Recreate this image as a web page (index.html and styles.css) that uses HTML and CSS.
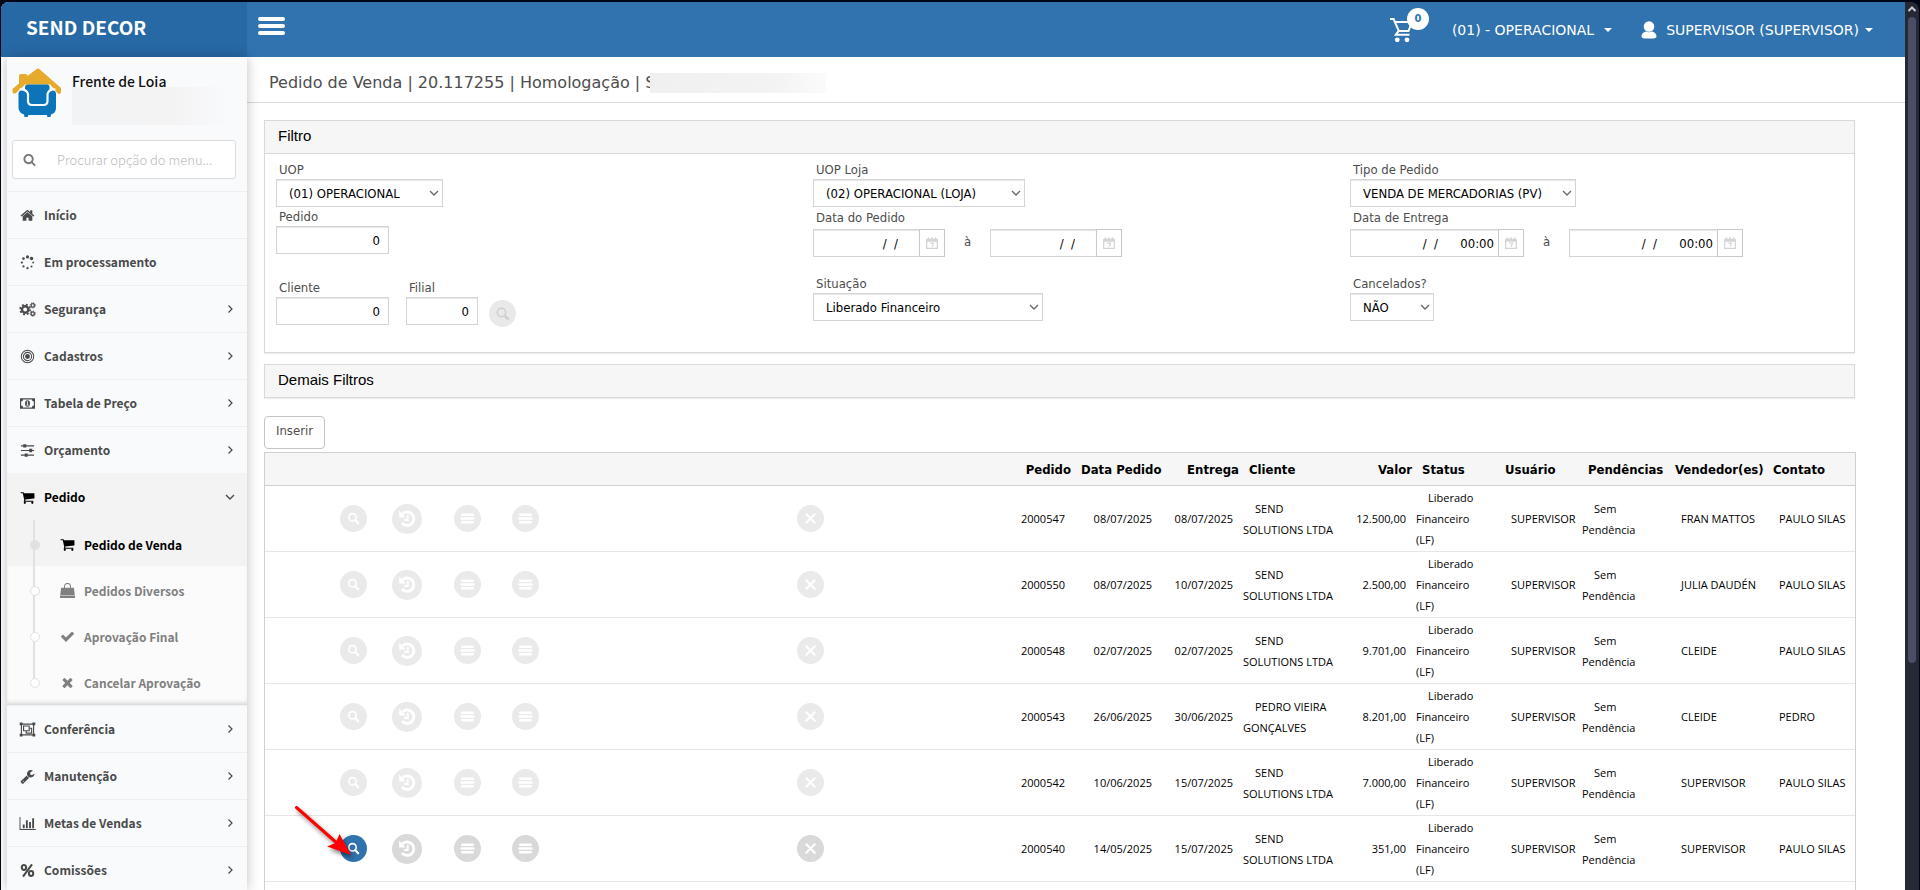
FILE: index.html
```html
<!DOCTYPE html>
<html lang="pt-BR">
<head>
<meta charset="utf-8">
<title>Pedido de Venda</title>
<link rel="stylesheet" href="styles.css">
</head>
<body>
<svg class="sprite" aria-hidden="true">
  <symbol id="i-home" viewBox="0 0 1792 1792"><path d="M1472 992v480q0 26-19 45t-45 19h-384v-384h-256v384h-384q-26 0-45-19t-19-45v-480q0-1 .5-3t.5-3l575-474 575 474q1 2 1 6zm223-69l-62 74q-8 9-21 11h-3q-13 0-21-7l-692-577-692 577q-12 8-24 7-13-2-21-11l-62-74q-8-10-7-23.5t11-21.5l719-599q32-26 76-26t76 26l244 204v-195q0-14 9-23t23-9h192q14 0 23 9t9 23v408l219 182q10 8 11 21.5t-7 23.5z"/></symbol>
  <symbol id="i-cart" viewBox="0 0 1792 1792"><path d="M704 1536q0 52-38 90t-90 38-90-38-38-90 38-90 90-38 90 38 38 90zm896 0q0 52-38 90t-90 38-90-38-38-90 38-90 90-38 90 38 38 90zm128-1088v512q0 24-16.5 42.5t-40.5 21.5l-1044 122q13 60 13 70 0 16-24 64h920q26 0 45 19t19 45-19 45-45 19h-1024q-26 0-45-19t-19-45q0-11 8-31.5t16-36 21.5-40 15.5-29.5l-177-823h-204q-26 0-45-19t-19-45 19-45 45-19h256q16 0 28.5 6.5t19.5 15.5 13 24.5 8 26 5.5 29.5 4.5 26h1201q26 0 45 19t19 45z"/></symbol>
  <symbol id="i-check" viewBox="0 0 1792 1792"><path d="M1671 566q0 40-28 68l-724 724-136 136q-28 28-68 28t-68-28l-136-136-362-362q-28-28-28-68t28-68l136-136q28-28 68-28t68 28l294 295 656-657q28-28 68-28t68 28l136 136q28 28 28 68z"/></symbol>
  <symbol id="i-times" viewBox="0 0 1792 1792"><path d="M1490 1322q0 40-28 68l-136 136q-28 28-68 28t-68-28l-294-294-294 294q-28 28-68 28t-68-28l-136-136q-28-28-28-68t28-68l294-294-294-294q-28-28-28-68t28-68l136-136q28-28 68-28t68 28l294 294 294-294q28-28 68-28t68 28l136 136q28 28 28 68t-28 68l-294 294 294 294q28 28 28 68z"/></symbol>
  <symbol id="i-search" viewBox="0 0 1792 1792"><path d="M1216 832q0-185-131.5-316.5t-316.5-131.5-316.5 131.5-131.5 316.5 131.5 316.5 316.5 131.5 316.5-131.5 131.5-316.5zm512 832q0 52-38 90t-90 38q-54 0-90-38l-343-342q-179 124-399 124-143 0-273.5-55.5t-225-150-150-225-55.5-273.5 55.5-273.5 150-225 225-150 273.5-55.5 273.5 55.5 225 150 150 225 55.5 273.5q0 220-124 399l343 343q37 37 37 90z"/></symbol>
  <symbol id="i-wrench" viewBox="0 0 1792 1792"><path d="M448 1472q0-26-19-45t-45-19-45 19-19 45 19 45 45 19 45-19 19-45zm644-420l-682 682q-37 37-90 37-52 0-91-37l-106-108q-38-36-38-90 0-53 38-91l681-681q39 98 114.5 173.5t173.5 114.5zm634-435q0 39-23 106-47 134-164.5 217.5t-258.5 83.5q-185 0-316.5-131.5t-131.5-316.5 131.5-316.5 316.5-131.5q58 0 121.5 16.5t107.5 46.5q16 11 16 28t-16 28l-293 169v224l193 107q5-3 79-48.5t135.5-81 70.5-35.5q15 0 23.5 10t8.5 25z"/></symbol>
  <symbol id="i-spinner" viewBox="0 0 16 16"><circle cx="8" cy="2" r="1.7"/><circle cx="12.3" cy="3.8" r="1.9"/><circle cx="14" cy="8" r="1"/><circle cx="12.3" cy="12.2" r="1.1"/><circle cx="8" cy="14" r="1.2"/><circle cx="3.7" cy="12.2" r="1.2"/><circle cx="2" cy="8" r="1.2"/><circle cx="3.7" cy="3.8" r="1.4"/></symbol>
  <symbol id="i-gears" viewBox="0 0 18 16"><g fill="none" stroke="currentColor"><circle cx="6.5" cy="8" r="3.4" stroke-width="2.6"/><circle cx="6.5" cy="8" r="5.3" stroke-width="1.8" stroke-dasharray="2.1 2.06"/><circle cx="14.6" cy="3.6" r="1.8" stroke-width="1.4"/><circle cx="14.6" cy="3.6" r="2.8" stroke-width="1" stroke-dasharray="1.1 1.1"/><circle cx="14.6" cy="12.4" r="1.8" stroke-width="1.4"/><circle cx="14.6" cy="12.4" r="2.8" stroke-width="1" stroke-dasharray="1.1 1.1"/></g></symbol>
  <symbol id="i-target" viewBox="0 0 16 16"><g fill="none" stroke="currentColor" stroke-width="1.1"><circle cx="8" cy="8" r="6.6"/><circle cx="8" cy="8" r="4.4"/></g><circle cx="8" cy="8" r="2.6"/></symbol>
  <symbol id="i-money" viewBox="0 0 18 16"><path fill-rule="evenodd" d="M1 2.5h16v11H1zM4.300 3.700A2.200 2.200 0 0 1 2.200 5.800v4.400a2.200 2.200 0 0 1 2.100 2.100h9.400a2.200 2.200 0 0 1 2.100-2.100V5.800a2.200 2.200 0 0 1-2.100-2.100z"/><ellipse cx="9" cy="8" rx="2.600" ry="3.400"/><path d="M8 6.500l1-.8h.5v3.700h.8v.8H7.800v-.8h.8V6.800z" fill="#f9fafc"/></symbol>
  <symbol id="i-sliders" viewBox="0 0 16 16"><path d="M1 2.500h14v1.200H1zM1 7.400h14v1.200H1zM1 12.300h14v1.200H1zM3.500 1.300h3.200v3.500H3.500zM9.800 6.200H13v3.600H9.800zM5 11.100h3.200v3.600H5z"/></symbol>
  <symbol id="i-bag" viewBox="0 0 18 16"><path d="M2.200 5h13.600l1 8H1.200zM1 13.600h16V16H1z"/><path d="M5.800 6.500V3.600a3.200 3.200 0 0 1 6.400 0v2.900" fill="none" stroke="currentColor" stroke-width="1.100"/></symbol>
  <symbol id="i-group" viewBox="0 0 18 16"><g fill="none" stroke="currentColor" stroke-width="1.200"><path d="M2.500 2.300h13v11.400h-13zM4.800 4.300h6v5h-6zM11 6.600h2.400v5.200H7.600V9.500"/></g><path d="M.7.500h3v3h-3zM14.300.500h3v3h-3zM.7 12.500h3v3h-3zM14.300 12.500h3v3h-3z"/></symbol>
  <symbol id="i-chart" viewBox="0 0 18 16"><path d="M.5 1h1v12.800H18V15H.5zM4 9h2v4H4zM7.300 4.500h2V13h-2zM10.700 6.500h2V13h-2zM14 2.500h2V13h-2z"/></symbol>
  <symbol id="i-percent" viewBox="0 0 16 16"><g fill="none" stroke="currentColor" stroke-width="2.200"><ellipse cx="4.200" cy="4.800" rx="2.300" ry="2.600"/><ellipse cx="11.800" cy="11.200" rx="2.300" ry="2.600"/><path d="M12.800 1.500L3.200 14.500"/></g></symbol>
  <symbol id="i-right" viewBox="0 0 10 10"><path d="M3.500 1.500L7 5 3.500 8.500" fill="none" stroke="currentColor" stroke-width="1.200"/></symbol>
  <symbol id="i-down" viewBox="0 0 10 10"><path d="M1 3l4 4 4-4" fill="none" stroke="currentColor" stroke-width="1.400"/></symbol>
  <symbol id="i-calendar" viewBox="0 0 12 12"><path fill-rule="evenodd" d="M0 2h12v10H0zM1.300 4.700v6h9.400v-6z"/><path d="M1.500.5h2v2h-2zM5 .5h2v2H5zM8.500.5h2v2h-2z"/><path d="M4.200 6.200h3.400L6 9.800" fill="none" stroke="currentColor" stroke-width="1.200"/></symbol>
  <symbol id="a-search" viewBox="0 0 27 27"><circle cx="13.500" cy="13.500" r="13.500"/><g fill="none" stroke="#fff"><circle cx="12.500" cy="12.300" r="3.700" stroke-width="1.600"/><path d="M15.200 15l3 3.300" stroke-width="2.200" stroke-linecap="round"/></g></symbol>
  <symbol id="a-history" viewBox="0 0 30 30"><circle cx="15" cy="15" r="15"/><path d="M10.600 9.800a6.700 6.700 0 1 1-.6 9.200" fill="none" stroke="#fff" stroke-width="2.900"/><path d="M7.200 6.500v7h6.700z" fill="#fff"/><path d="M15.800 11v5h-3.600" fill="none" stroke="#fff" stroke-width="1.800"/></symbol>
  <symbol id="a-list" viewBox="0 0 27 27"><circle cx="13.500" cy="13.500" r="13.500"/><path d="M8.300 9.800h10.400M7.600 13.500h11.800M8.300 17.200h10.400" stroke="#fff" stroke-width="2.600" stroke-linecap="round"/></symbol>
  <symbol id="a-close" viewBox="0 0 27 27"><circle cx="13.500" cy="13.500" r="13.500"/><path d="M9.300 9.300l8.400 8.400M17.700 9.300l-8.400 8.400" stroke="#fff" stroke-width="2.100" stroke-linecap="round"/></symbol>
</svg>

<div class="window">
  <div class="app">
    <header class="topbar">
      <a class="brand" href="#">SEND DECOR</a>
      <button class="burger" type="button" aria-label="Menu"><span></span><span></span><span></span></button>
      <nav class="account">
        <a class="basket" href="#" aria-label="Carrinho">
          <svg width="24" height="26" viewBox="0 0 24 26"><g fill="none" stroke="#fff" stroke-width="2"><path d="M1 2h3.600l5.200 12h9.700L23 5H6.500"/><path d="M9.500 14l-2.700 3.800h13.700"/></g><circle cx="8.300" cy="22.800" r="2.400" fill="#fff"/><circle cx="18" cy="22.800" r="2.400" fill="#fff"/></svg>
          <span class="badge">0</span>
        </a>
        <button class="drop unit" type="button">(01) - OPERACIONAL <i class="caret"></i></button>
        <button class="drop user" type="button"><svg width="16" height="18" viewBox="0 0 16 18" fill="#fff"><circle cx="8" cy="5.500" r="5.300"/><path d="M.5 15.500C.5 12.500 3 11 5 10.500c2 1 4 1 6 0 2 .5 4.500 2 4.500 5 0 1.500-2 2-4 2h-7c-2 0-4-.5-4-2z"/></svg>SUPERVISOR (SUPERVISOR) <i class="caret"></i></button>
      </nav>
    </header>

    <div class="columns">
      <aside class="sidebar">
        <div class="profile">
          <svg width="50" height="50" viewBox="0 0 50 50"><path d="M.5 21L7 15.500V8q0-2 2-2h4.500q2 0 2 2L25 .8q1-.8 2 0L49 20v4.500q-1 2.500-3.500.5L38 16.500H13L4 25q-3 1.500-3.500-1z" fill="#e6ab2b"/><path d="M16 16.500h19q2.500 0 2.500 2.500v3q5-1.500 6.500 3v15q0 5-5 6.500l-.5 2.500h-3l-.8-2H16.500l-1 2h-3l-.5-2.500q-5-1.500-5.500-6.500V25q1.500-4.500 6.500-3V19q0-2.500 3-2.500z" fill="#0c74b8"/><path d="M7.500 21.500q7-.5 8.500 4.500v7q0 4 4 4h11.500q4 0 4-4v-7q1.500-5 8-4.500" fill="none" stroke="#f9fafc" stroke-width="2.200"/></svg>
          <div class="who"><strong>Frente de Loja</strong><span class="veil"></span></div>
        </div>
        <label class="find"><svg class="ico"><use href="#i-search"/></svg><input type="search" placeholder="Procurar opção do menu..." aria-label="Procurar opção do menu"></label>
        <nav class="menu">
          <a href="#"><svg class="ico"><use href="#i-home"/></svg><span>Início</span></a>
          <a href="#"><svg class="ico"><use href="#i-spinner"/></svg><span>Em processamento</span></a>
          <a href="#"><svg class="ico"><use href="#i-gears"/></svg><span>Segurança</span><svg class="arrow"><use href="#i-right"/></svg></a>
          <a href="#"><svg class="ico"><use href="#i-target"/></svg><span>Cadastros</span><svg class="arrow"><use href="#i-right"/></svg></a>
          <a href="#"><svg class="ico"><use href="#i-money"/></svg><span>Tabela de Preço</span><svg class="arrow"><use href="#i-right"/></svg></a>
          <a href="#"><svg class="ico"><use href="#i-sliders"/></svg><span>Orçamento</span><svg class="arrow"><use href="#i-right"/></svg></a>
          <a href="#" class="open"><svg class="ico"><use href="#i-cart"/></svg><span>Pedido</span><svg class="arrow"><use href="#i-down"/></svg></a>
          <div class="submenu">
            <a href="#" class="current"><svg class="ico"><use href="#i-cart"/></svg><span>Pedido de Venda</span></a>
            <a href="#"><svg class="ico"><use href="#i-bag"/></svg><span>Pedidos Diversos</span></a>
            <a href="#"><svg class="ico"><use href="#i-check"/></svg><span>Aprovação Final</span></a>
            <a href="#"><svg class="ico"><use href="#i-times"/></svg><span>Cancelar Aprovação</span></a>
          </div>
          <a href="#"><svg class="ico"><use href="#i-group"/></svg><span>Conferência</span><svg class="arrow"><use href="#i-right"/></svg></a>
          <a href="#"><svg class="ico"><use href="#i-wrench"/></svg><span>Manutenção</span><svg class="arrow"><use href="#i-right"/></svg></a>
          <a href="#"><svg class="ico"><use href="#i-chart"/></svg><span>Metas de Vendas</span><svg class="arrow"><use href="#i-right"/></svg></a>
          <a href="#"><svg class="ico"><use href="#i-percent"/></svg><span>Comissões</span><svg class="arrow"><use href="#i-right"/></svg></a>
        </nav>
      </aside>

      <main class="main">
        <h1 class="title">Pedido de Venda | 20.117255 | Homologação | S<span class="veil"></span></h1>
        <div class="content">
          <section class="panel">
            <h2>Filtro</h2>
            <div class="filters">
              <div class="col">
                <div class="field"><label for="uop">UOP</label><span class="select w-uop"><select id="uop"><option>(01) OPERACIONAL</option></select><svg><use href="#i-down"/></svg></span></div>
                <div class="field"><label for="pedido">Pedido</label><input id="pedido" class="box num w-code" value="0"></div>
                <div class="line client">
                  <div class="field"><label for="cliente">Cliente</label><input id="cliente" class="box num w-code" value="0"></div>
                  <div class="field"><label for="filial">Filial</label><input id="filial" class="box num w-branch" value="0"></div>
                  <button class="lookup" type="button" aria-label="Pesquisar cliente"><svg width="14" height="14" viewBox="0 0 14 14"><g fill="none" stroke="#cfcfcf"><circle cx="5.500" cy="5.500" r="4.200" stroke-width="1.600"/><path d="M8.800 8.800l3.800 3.800" stroke-width="2.600"/></g></svg></button>
                </div>
              </div>
              <div class="col">
                <div class="field"><label for="uoploja">UOP Loja</label><span class="select w-loja"><select id="uoploja"><option>(02) OPERACIONAL (LOJA)</option></select><svg><use href="#i-down"/></svg></span></div>
                <div class="field dates"><label for="dp1">Data do Pedido</label>
                  <div class="line">
                    <span class="date"><input id="dp1" class="box w-date" value="/  /"><button type="button" aria-label="Calendário"><svg><use href="#i-calendar"/></svg></button></span>
                    <span class="to">à</span>
                    <span class="date"><input class="box w-date" value="/  /" aria-label="Data do Pedido final"><button type="button" aria-label="Calendário"><svg><use href="#i-calendar"/></svg></button></span>
                  </div>
                </div>
                <div class="field last"><label for="situacao">Situação</label><span class="select w-sit"><select id="situacao"><option>Liberado Financeiro</option></select><svg><use href="#i-down"/></svg></span></div>
              </div>
              <div class="col">
                <div class="field"><label for="tipo">Tipo de Pedido</label><span class="select w-tipo"><select id="tipo"><option>VENDA DE MERCADORIAS (PV)</option></select><svg><use href="#i-down"/></svg></span></div>
                <div class="field dates"><label for="de1">Data de Entrega</label>
                  <div class="line">
                    <span class="date"><input id="de1" class="box w-time" value="/  /      00:00"><button type="button" aria-label="Calendário"><svg><use href="#i-calendar"/></svg></button></span>
                    <span class="to">à</span>
                    <span class="date"><input class="box w-time" value="/  /      00:00" aria-label="Data de Entrega final"><button type="button" aria-label="Calendário"><svg><use href="#i-calendar"/></svg></button></span>
                  </div>
                </div>
                <div class="field last"><label for="cancelados">Cancelados?</label><span class="select w-canc"><select id="cancelados"><option>NÃO</option></select><svg><use href="#i-down"/></svg></span></div>
              </div>
            </div>
          </section>

          <section class="panel closed"><h2>Demais Filtros</h2></section>

          <button class="insert" type="button">Inserir</button>

          <table class="orders">
            <colgroup><col class="c-gap"><col class="c-a"><col class="c-a"><col class="c-c"><col class="c-d"><col><col class="c-ped"><col class="c-data"><col class="c-ent"><col class="c-cli"><col class="c-val"><col class="c-sta"><col class="c-usu"><col class="c-pen"><col class="c-ven"><col class="c-con"></colgroup>
            <thead><tr><th colspan="6"></th><th class="r">Pedido</th><th class="r">Data Pedido</th><th class="r">Entrega</th><th>Cliente</th><th class="r">Valor</th><th>Status</th><th>Usuário</th><th>Pendências</th><th>Vendedor(es)</th><th>Contato</th></tr></thead>
            <tbody>
              <tr><td></td><td class="act"><button type="button" aria-label="Ver"><svg><use href="#a-search"/></svg></button></td><td class="act"><button class="big" type="button" aria-label="Histórico"><svg><use href="#a-history"/></svg></button></td><td class="act"><button type="button" aria-label="Lista"><svg><use href="#a-list"/></svg></button></td><td class="act"><button type="button" aria-label="Detalhes"><svg><use href="#a-list"/></svg></button></td><td class="act far"><button type="button" aria-label="Cancelar"><svg><use href="#a-close"/></svg></button></td><td class="r">2000547</td><td class="r">08/07/2025</td><td class="r">08/07/2025</td><td class="t">SEND SOLUTIONS LTDA</td><td class="r">12.500,00</td><td class="t status">Liberado Financeiro (LF)</td><td class="t">SUPERVISOR</td><td class="t">Sem Pendência</td><td class="t">FRAN MATTOS</td><td class="t">PAULO SILAS</td></tr>
              <tr><td></td><td class="act"><button type="button" aria-label="Ver"><svg><use href="#a-search"/></svg></button></td><td class="act"><button class="big" type="button" aria-label="Histórico"><svg><use href="#a-history"/></svg></button></td><td class="act"><button type="button" aria-label="Lista"><svg><use href="#a-list"/></svg></button></td><td class="act"><button type="button" aria-label="Detalhes"><svg><use href="#a-list"/></svg></button></td><td class="act far"><button type="button" aria-label="Cancelar"><svg><use href="#a-close"/></svg></button></td><td class="r">2000550</td><td class="r">08/07/2025</td><td class="r">10/07/2025</td><td class="t">SEND SOLUTIONS LTDA</td><td class="r">2.500,00</td><td class="t status">Liberado Financeiro (LF)</td><td class="t">SUPERVISOR</td><td class="t">Sem Pendência</td><td class="t">JULIA DAUDÉN</td><td class="t">PAULO SILAS</td></tr>
              <tr><td></td><td class="act"><button type="button" aria-label="Ver"><svg><use href="#a-search"/></svg></button></td><td class="act"><button class="big" type="button" aria-label="Histórico"><svg><use href="#a-history"/></svg></button></td><td class="act"><button type="button" aria-label="Lista"><svg><use href="#a-list"/></svg></button></td><td class="act"><button type="button" aria-label="Detalhes"><svg><use href="#a-list"/></svg></button></td><td class="act far"><button type="button" aria-label="Cancelar"><svg><use href="#a-close"/></svg></button></td><td class="r">2000548</td><td class="r">02/07/2025</td><td class="r">02/07/2025</td><td class="t">SEND SOLUTIONS LTDA</td><td class="r">9.701,00</td><td class="t status">Liberado Financeiro (LF)</td><td class="t">SUPERVISOR</td><td class="t">Sem Pendência</td><td class="t">CLEIDE</td><td class="t">PAULO SILAS</td></tr>
              <tr><td></td><td class="act"><button type="button" aria-label="Ver"><svg><use href="#a-search"/></svg></button></td><td class="act"><button class="big" type="button" aria-label="Histórico"><svg><use href="#a-history"/></svg></button></td><td class="act"><button type="button" aria-label="Lista"><svg><use href="#a-list"/></svg></button></td><td class="act"><button type="button" aria-label="Detalhes"><svg><use href="#a-list"/></svg></button></td><td class="act far"><button type="button" aria-label="Cancelar"><svg><use href="#a-close"/></svg></button></td><td class="r">2000543</td><td class="r">26/06/2025</td><td class="r">30/06/2025</td><td class="t">PEDRO VIEIRA GONÇALVES</td><td class="r">8.201,00</td><td class="t status">Liberado Financeiro (LF)</td><td class="t">SUPERVISOR</td><td class="t">Sem Pendência</td><td class="t">CLEIDE</td><td class="t">PEDRO</td></tr>
              <tr><td></td><td class="act"><button type="button" aria-label="Ver"><svg><use href="#a-search"/></svg></button></td><td class="act"><button class="big" type="button" aria-label="Histórico"><svg><use href="#a-history"/></svg></button></td><td class="act"><button type="button" aria-label="Lista"><svg><use href="#a-list"/></svg></button></td><td class="act"><button type="button" aria-label="Detalhes"><svg><use href="#a-list"/></svg></button></td><td class="act far"><button type="button" aria-label="Cancelar"><svg><use href="#a-close"/></svg></button></td><td class="r">2000542</td><td class="r">10/06/2025</td><td class="r">15/07/2025</td><td class="t">SEND SOLUTIONS LTDA</td><td class="r">7.000,00</td><td class="t status">Liberado Financeiro (LF)</td><td class="t">SUPERVISOR</td><td class="t">Sem Pendência</td><td class="t">SUPERVISOR</td><td class="t">PAULO SILAS</td></tr>
              <tr class="active"><td></td><td class="act"><button class="go" type="button" aria-label="Ver"><svg><use href="#a-search"/></svg></button>
                <svg class="pointer" width="66" height="58" viewBox="0 0 66 58"><path d="M4.500 3.500L46 40" stroke="#f00" stroke-width="3" stroke-linecap="round"/><path d="M59 51L35 42.500l8.500-3.500 4-9z" fill="#f00"/></svg></td><td class="act"><button class="big" type="button" aria-label="Histórico"><svg><use href="#a-history"/></svg></button></td><td class="act"><button type="button" aria-label="Lista"><svg><use href="#a-list"/></svg></button></td><td class="act"><button type="button" aria-label="Detalhes"><svg><use href="#a-list"/></svg></button></td><td class="act far"><button type="button" aria-label="Cancelar"><svg><use href="#a-close"/></svg></button></td><td class="r">2000540</td><td class="r">14/05/2025</td><td class="r">15/07/2025</td><td class="t">SEND SOLUTIONS LTDA</td><td class="r">351,00</td><td class="t status">Liberado Financeiro (LF)</td><td class="t">SUPERVISOR</td><td class="t">Sem Pendência</td><td class="t">SUPERVISOR</td><td class="t">PAULO SILAS</td></tr>
              <tr class="next"><td colspan="16"></td></tr>
            </tbody>
          </table>
        </div>
      </main>
    </div>
  </div>
  <div class="scroll" aria-hidden="true"><svg width="10" height="8" viewBox="0 0 10 8"><path d="M1.500 6L5 2.500 8.500 6" fill="none" stroke="#c8cad0" stroke-width="2"/></svg><span class="thumb"></span></div>
</div>
</body>
</html>
```
FILE: styles.css
```css
* { box-sizing: border-box; }

body {
  margin: 0;
  height: 100vh;
  overflow: hidden;
  background: #020516;
  font-family: "DejaVu Sans Condensed", "DejaVu Sans", sans-serif;
  font-size: 13px;
  color: #000;
}

a { color: inherit; text-decoration: none; }
button { font: inherit; color: inherit; border: 0; padding: 0; background: none; cursor: pointer; }
svg { display: block; flex: none; fill: currentColor; }
.sprite { position: absolute; width: 0; height: 0; }

.window {
  display: flex;
  height: 100vh;
  padding: 2px 1px 0;
}
.app {
  flex: 1;
  min-width: 0;
  display: flex;
  flex-direction: column;
  overflow: hidden;
  border-top-left-radius: 8px;
  background: #fff;
}

/* top bar */
.topbar {
  flex: none;
  display: flex;
  height: 55px;
  background: #3073af;
  color: #fff;
}
.brand {
  width: 246px;
  padding: 10px 25px;
  background: #2769a5;
  font: bold 19px/30px "Noto Sans CJK SC", sans-serif;
}
.burger {
  display: flex;
  flex-direction: column;
  gap: 3px;
  margin: 15px 0 0 11px;
  height: 18px;
}
.burger span { width: 27px; height: 4px; border-radius: 2px; background: #fff; }
.account {
  margin-left: auto;
  padding-right: 32px;
  display: flex;
  align-items: center;
  font: 14px/20px "DejaVu Sans", sans-serif;
}
.basket { position: relative; margin-right: 39px; }
.badge {
  position: absolute;
  left: 18px;
  top: -9px;
  width: 22px;
  height: 22px;
  border-radius: 50%;
  background: #fff;
  color: #3073af;
  font: bold 11px/21px "DejaVu Sans Condensed", sans-serif;
  text-align: center;
}
.drop { display: flex; align-items: center; }
.user { margin-left: 29px; }
.user svg { margin-right: 9px; }
.caret { margin-left: 10px; border: 4px solid transparent; border-top-color: #fff; border-bottom: 0; }
.user .caret { margin-left: 6px; }

.columns { flex: 1; min-height: 0; display: flex; }

/* sidebar */
.sidebar {
  z-index: 1;
  width: 240px;
  margin-left: 6px;
  flex: none;
  background: #f9fafc;
  box-shadow: 0 0 12px rgba(0, 0, 0, .25);
  font: bold 12px/20px "Noto Sans CJK SC", sans-serif;
  color: #4a4a4a;
}
.profile { display: flex; gap: 10px; height: 83px; padding: 11px 5px 0; }
.who { padding-top: 3px; width: 160px; }
.who strong { display: block; font-size: 14px; line-height: 20px; color: #111; font-weight: 500; }
.veil { display: block; background: linear-gradient(90deg, #f2f3f4, #f3f3f4 60%, #f9fafc); }
.who .veil { position: relative; height: 38px; margin-top: -4px; }
.find {
  display: flex;
  align-items: center;
  margin: 0 11px 0 5px;
  height: 39px;
  border: 1px solid #dcdcdc;
  border-radius: 3px;
  background: #fff;
  color: #777;
}
.find .ico { width: 13px; height: 13px; margin: 0 19px 0 10px; }
.find input {
  flex: 1;
  min-width: 0;
  border: 0;
  outline: 0;
  background: none;
  font: 300 13px "Noto Sans CJK SC", sans-serif;
}
.find input::placeholder { color: #bbb; }
.menu { margin-top: 12px; }
.menu a {
  display: flex;
  align-items: center;
  height: 47px;
  padding: 0 12px;
  border-top: 1px solid #efeff1;
}
.menu .ico { width: 17px; height: 15px; margin-right: 8px; }
.menu span { flex: 1; }
.menu .arrow { width: 10px; height: 10px; }
.menu .open { background: #f3f3f3; border-color: #f3f3f3; color: #000; }
.menu .open .arrow { color: #4a4a4a; }
.submenu { position: relative; background: #fbfbfb; box-shadow: inset 0 -4px 4px -2px #d5d5d5; padding-bottom: 1px; }
.submenu::before {
  content: "";
  position: absolute;
  left: 26px;
  top: 0;
  width: 2px;
  height: 163px;
  background: #e1e1e1;
}
.submenu a { height: 46px; border: 0; padding: 3px 12px 0 23px; color: #808080; }
.submenu a::before {
  content: "";
  z-index: 1;
  width: 8px;
  height: 8px;
  margin-right: 19px;
  border: 1px solid #e1e1e1;
  border-radius: 50%;
  background: #fff;
}
.submenu .current { background: #f3f3f3; color: #000; }
.submenu .current::before { background: #e1e1e1; }

/* page */
.main { flex: 1; min-width: 0; }
.title {
  display: flex;
  align-items: center;
  margin: 0;
  height: 46px;
  padding: 6px 22px 0;
  border-bottom: 1px solid #d9d9d9;
  font: 16px/20px "DejaVu Sans", sans-serif;
  color: #4d4d4d;
}
.title .veil { position: relative; width: 176px; height: 20px; margin-left: -5px; background: linear-gradient(90deg, #f0f0f0, #f3f3f3 70%, #fbfbfb); }
.content { padding: 17px 50px 0 17px; }

.panel { border: 1px solid #d9d9d9; box-shadow: 0 1px 1px #eee; }
.panel h2 {
  margin: 0;
  height: 33px;
  padding: 0 13px;
  border-bottom: 1px solid #d9d9d9;
  background: #f6f6f6;
  font: 15px/30px "Liberation Sans", sans-serif;
}
.closed { margin-top: 11px; }
.closed h2 { height: 32px; border-bottom: 0; }
.filters {
  display: grid;
  grid-template-columns: repeat(3, 1fr);
  column-gap: 44px;
  padding: 6px 11px 25px;
}
.field { display: flex; flex-direction: column; align-items: flex-start; color: #4d4d4d; }
.field label { padding-left: 3px; line-height: 19px; }
.line { display: flex; align-items: flex-start; }
.client { margin-top: 24px; gap: 17px; }
.dates { margin-top: 1px; }
.dates label { margin-bottom: 2px; }
.last { margin-top: 17px; }
.box, .select select {
  height: 28px;
  border: 1px solid #d5d5d5;
  border-radius: 0;
  background: #fff;
  box-shadow: inset 0 1px 1px #e6e6e6;
  color: #000;
  font: 13px "DejaVu Sans Condensed", sans-serif;
  outline: 0;
}
.num { padding: 0 8px; text-align: right; }
.select { display: grid; align-items: center; }
.select select, .select svg { grid-area: 1 / 1; }
.select select { appearance: none; width: 100%; padding: 0 12px; }
.select svg { justify-self: end; width: 10px; height: 10px; margin-right: 4px; color: #6b6b6b; pointer-events: none; }
.date { display: flex; }
.date .box { text-align: right; white-space: pre; border-right: 0; }
.date button { display: grid; place-items: center; width: 26px; height: 28px; border: 1px solid #c9c9c9; color: #d5d5d5; }
.date svg { width: 12px; height: 12px; }
.to { width: 45px; line-height: 26px; text-align: center; }
.w-uop { width: 167px; }
.w-code { width: 113px; }
.w-branch { width: 72px; }
.w-loja { width: 212px; }
.w-sit { width: 230px; }
.w-tipo { width: 226px; }
.w-canc { width: 84px; }
.w-date { width: 106px; padding: 0 21px 0 0; }
.w-time { width: 148px; padding: 0 4px 0 0; }
.lookup {
  display: grid;
  place-items: center;
  width: 27px;
  height: 27px;
  margin: 22px 0 0 -6px;
  border-radius: 50%;
  background: #e9e9e9;
}

.insert {
  display: block;
  height: 33px;
  margin: 18px 0 3px;
  padding: 0 11px 4px;
  border: 1px solid #c4c4c4;
  border-radius: 4px;
  background: #fff;
  color: #4d4d4d;
}

/* orders */
.orders {
  width: calc(100% + 1px);
  table-layout: fixed;
  border-collapse: separate;
  border-spacing: 0;
  border: 1px solid #d0d0d0;
}
.orders th {
  height: 33px;
  padding: 0 4px 0 6px;
  border-bottom: 1px solid #d0d0d0;
  background: #f6f6f6;
  text-align: left;
  white-space: nowrap;
}
.orders td {
  height: 66px;
  padding: 1px 0;
  border-bottom: 1px solid #e6e6e6;
  font: 11px/21px "Open Sans", sans-serif;
}
.orders .r { text-align: right; }
.orders td.r { padding-right: 10px; }
.orders .t { text-indent: 12px; }
.orders .status { padding-right: 20px; }
.orders .act { position: relative; color: #eaeaea; }
.act button { display: block; width: 27px; height: 27px; margin: 0 auto; }
.act button svg { width: 100%; height: 100%; }
.act .big { width: 30px; height: 30px; }
.orders .far { padding-left: 60px; }
.active .act { color: #d9d9d9; }
.active .go { color: #3073af; }
.pointer { position: absolute; right: 22px; top: -12px; filter: drop-shadow(2px 3px 2px rgba(0, 0, 0, .5)); pointer-events: none; }
.c-gap { width: 61px; }
.c-a { width: 54px; }
.c-c { width: 66px; }
.c-d { width: 50px; }
.c-ped { width: 64px; }
.c-data { width: 87px; }
.c-ent { width: 81px; }
.c-cli { width: 102px; }
.c-val { width: 71px; }
.c-sta { width: 83px; }
.c-usu { width: 83px; }
.c-pen { width: 87px; }
.c-ven { width: 98px; }
.c-con { width: 88px; }

/* window scrollbar */
.scroll {
  flex: none;
  width: 14px;
  padding-top: 3px;
  display: flex;
  flex-direction: column;
  align-items: center;
  gap: 4px;
  border-top-right-radius: 8px;
  background: #252935;
}
.thumb { width: 8px; height: 73%; border-radius: 4px; background: #4a4e65; }
```
